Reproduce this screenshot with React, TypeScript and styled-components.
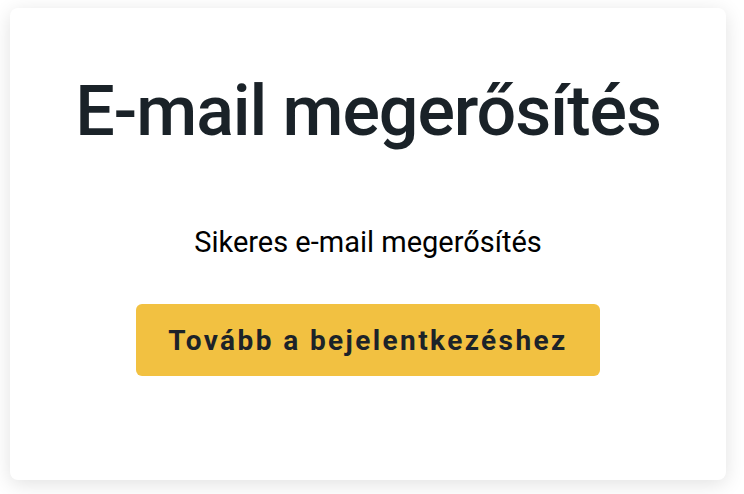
import styled, { createGlobalStyle } from "styled-components";

const GlobalStyle = createGlobalStyle`
  html, body {
    margin: 0;
    padding: 0;
    background: #ffffff;
    font-family: Roboto, "Liberation Sans", sans-serif;
  }
`;

const App = () => {
  return (
    <Page>
      <GlobalStyle />
      <Card>
        <Title>E-mail megerősítés</Title>
        <Message>Sikeres e-mail megerősítés</Message>
        <LoginButton type="button">Tovább a bejelentkezéshez</LoginButton>
      </Card>
    </Page>
  );
};

export default App;

const Page = styled.div`
  width: 744px;
  height: 494px;
  box-sizing: border-box;
  padding: 8px 18px 14px 10px;
`;

const Card = styled.div`
  box-sizing: border-box;
  width: 716px;
  height: 472px;
  background: #ffffff;
  border-radius: 8px;
  box-shadow: 0 4px 20px rgba(0, 0, 0, 0.12);
  display: flex;
  flex-direction: column;
  align-items: center;
  padding-top: 63px;
`;

const Title = styled.h1`
  margin: 0;
  font-size: 70px;
  font-weight: 500;
  line-height: 80px;
  letter-spacing: -1.1px;
  color: #1a2228;
`;

const Message = styled.p`
  margin: 73px 0 0;
  font-size: 29px;
  font-weight: 400;
  line-height: 36px;
  color: #000000;
`;

const LoginButton = styled.button`
  margin-top: 44px;
  width: 464px;
  height: 72px;
  border: none;
  border-radius: 6px;
  background: #f2c141;
  color: #1c2329;
  font-family: Roboto, "Liberation Sans", sans-serif;
  font-size: 28px;
  font-weight: 700;
  letter-spacing: 2.4px;
  cursor: pointer;
`;
